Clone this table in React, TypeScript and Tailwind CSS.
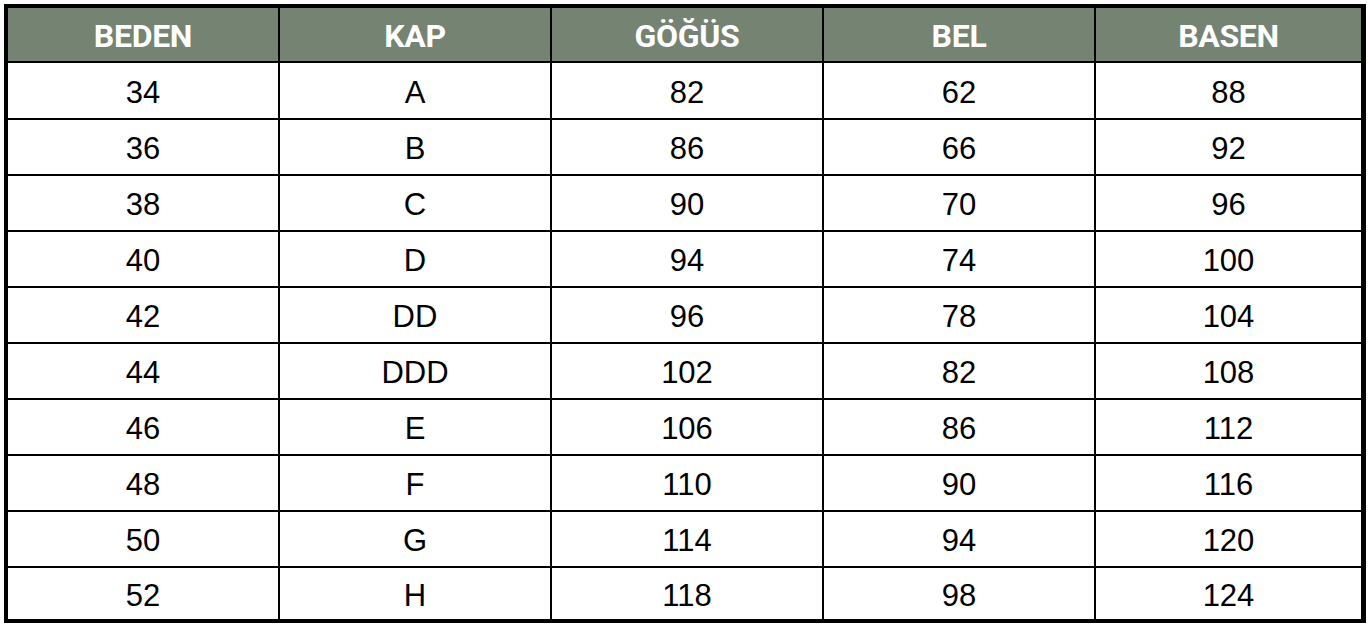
const headers = ["BEDEN", "KAP", "GÖĞÜS", "BEL", "BASEN"];

const rows = [
  ["34", "A", "82", "62", "88"],
  ["36", "B", "86", "66", "92"],
  ["38", "C", "90", "70", "96"],
  ["40", "D", "94", "74", "100"],
  ["42", "DD", "96", "78", "104"],
  ["44", "DDD", "102", "82", "108"],
  ["46", "E", "106", "86", "112"],
  ["48", "F", "110", "90", "116"],
  ["50", "G", "114", "94", "120"],
  ["52", "H", "118", "98", "124"],
];

export default function App() {
  return (
    <div className="min-h-screen bg-white pt-[4px] pl-[4px]">
      <div className="w-[1362px] border-4 border-r-[5px] border-black bg-black">
        <div className="grid grid-cols-[270px_270px_270px_270px_1fr] grid-rows-[53px_55px_54px_54px_54px_54px_54px_54px_54px_54px_51px] gap-[2px]">
          {headers.map((h) => (
            <div
              key={h}
              className="flex items-center justify-center bg-[#758472] pt-[3px] text-[32px] font-bold tracking-[-0.3px] text-white"
              style={{ fontFamily: "Roboto, sans-serif" }}
            >
              {h}
            </div>
          ))}
          {rows.map((r, i) =>
            r.map((c, j) => (
              <div
                key={i + "-" + j}
                className="flex items-center justify-center bg-white pt-[5px] text-[31px] text-black"
                style={{ fontFamily: '"Liberation Sans", Arial, sans-serif' }}
              >
                {c}
              </div>
            ))
          )}
        </div>
      </div>
    </div>
  );
}
